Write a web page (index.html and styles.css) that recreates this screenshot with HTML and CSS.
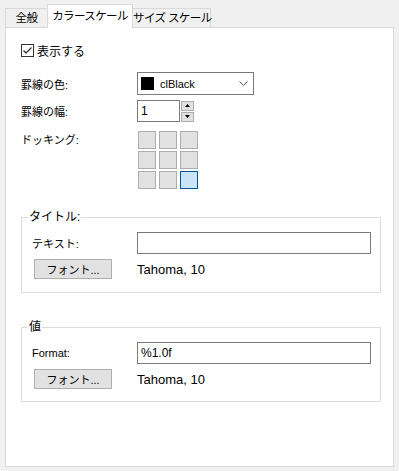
FILE: index.html
```html
<!DOCTYPE html>
<html lang="ja">
<head>
    <meta charset="UTF-8">
    <title>カラースケール</title>
    <link rel="stylesheet" href="styles.css">
</head>
<body>
    <div class="tabs">
        <div class="tab tab-general">全般</div>
        <div class="tab tab-color active">カラースケール</div>
        <div class="tab tab-size">サイズ スケール</div>
    </div>
    <div class="panel">
        <label class="check-row">
            <span class="checkbox">
                <svg width="11" height="11" viewBox="0 0 11 11"><path d="M1.5 5.5 L4 8 L9.5 2.5" fill="none" stroke="#333" stroke-width="1.3"/></svg>
            </span>
            表示する
        </label>

        <div class="row row-combo">
            <span class="label">罫線の色:</span>
            <div class="combo">
                <span class="swatch"></span>
                <span class="combo-text">clBlack</span>
                <svg class="chevron" width="9" height="5" viewBox="0 0 9 5"><path d="M0.5 0.5 L4.5 4.5 L8.5 0.5" fill="none" stroke="#555" stroke-width="1"/></svg>
            </div>
        </div>

        <div class="row row-spin">
            <span class="label">罫線の幅:</span>
            <div class="edit spin-edit">1</div>
            <div class="spin">
                <div class="spin-btn"><svg width="5" height="3" viewBox="0 0 5 3"><path d="M0 3 L2.5 0 L5 3 Z" fill="#000"/></svg></div>
                <div class="spin-btn"><svg width="5" height="3" viewBox="0 0 5 3"><path d="M0 0 L2.5 3 L5 0 Z" fill="#000"/></svg></div>
            </div>
        </div>

        <div class="row row-dock">
            <span class="label">ドッキング:</span>
            <div class="dock-grid">
                <div class="cell"></div>
                <div class="cell"></div>
                <div class="cell"></div>
                <div class="cell"></div>
                <div class="cell"></div>
                <div class="cell"></div>
                <div class="cell"></div>
                <div class="cell"></div>
                <div class="cell selected"></div>
            </div>
        </div>

        <fieldset class="group group-title">
            <legend>タイトル:</legend>
            <div class="group-row">
                <span class="group-label">テキスト:</span>
                <div class="edit wide"></div>
            </div>
            <div class="group-row font-row">
                <button class="btn">フォント...</button>
                <span class="font-name">Tahoma, 10</span>
            </div>
        </fieldset>

        <fieldset class="group group-value">
            <legend>値</legend>
            <div class="group-row">
                <span class="group-label">Format:</span>
                <div class="edit wide">%1.0f</div>
            </div>
            <div class="group-row font-row">
                <button class="btn">フォント...</button>
                <span class="font-name">Tahoma, 10</span>
            </div>
        </fieldset>
    </div>
</body>
</html>
```

FILE: styles.css
```css
body {
    margin: 0;
    background-color: #f0f0f0;
    font-family: "Liberation Sans", "Noto Sans CJK JP", sans-serif;
    font-size: 11px;
    color: #000;
}
.tabs {
    display: flex;
    align-items: flex-end;
    height: 27px;
    padding-left: 5px;
}
.tab {
    height: 18px;
    line-height: 18px;
    font-size: 11.5px;
    letter-spacing: -0.6px;
    text-align: center;
    white-space: nowrap;
    background-color: #f0f0f0;
    border: 1px solid #d9d9d9;
    border-bottom: none;
    margin-right: -1px;
}
.tab-general {
    width: 41px;
}
.tab-color {
    width: 84px;
}
.tab-size {
    width: 77px;
}
.tab.active {
    position: relative;
    height: 23px;
    line-height: 22px;
    margin-bottom: -1px;
    background-color: white;
    z-index: 1;
}
.panel {
    width: 372px;
    height: 438px;
    margin-left: 5px;
    background-color: white;
    border: 1px solid #d9d9d9;
    padding-left: 15px;
    box-sizing: content-box;
}
.check-row {
    display: flex;
    align-items: center;
    gap: 3px;
    margin-top: 16px;
    height: 13px;
    font-size: 12px;
}
.checkbox {
    width: 11px;
    height: 11px;
    border: 1px solid #333;
    display: flex;
}
.row {
    display: flex;
    align-items: center;
}
.label {
    width: 116px;
    font-size: 11px;
}
.row-combo {
    margin-top: 15px;
    height: 23px;
}
.combo {
    width: 112px;
    height: 21px;
    border: 1px solid #7a7a7a;
    display: flex;
    align-items: center;
    padding-left: 3px;
    box-sizing: content-box;
}
.swatch {
    width: 13px;
    height: 13px;
    background-color: #000;
    margin-right: 6px;
}
.combo-text {
    flex: 1;
}
.chevron {
    margin-right: 5px;
}
.row-spin {
    margin-top: 5px;
    height: 22px;
}
.edit {
    border: 1px solid #7a7a7a;
    background-color: white;
    height: 20px;
    line-height: 20px;
    padding-left: 3px;
    box-sizing: border-box;
    font-size: 12px;
}
.spin-edit {
    width: 43px;
    height: 22px;
    line-height: 20px;
}
.spin {
    margin-left: 1px;
    display: flex;
    flex-direction: column;
    gap: 1px;
}
.spin-btn {
    width: 13px;
    height: 10px;
    background-color: #e1e1e1;
    border: 1px solid #adadad;
    box-sizing: border-box;
    display: flex;
    align-items: center;
    justify-content: center;
}
.row-dock {
    margin-top: 9px;
    align-items: flex-start;
}
.dock-grid {
    display: grid;
    grid-template-columns: repeat(3, 18px);
    grid-auto-rows: 18px;
    column-gap: 3px;
    row-gap: 2px;
    margin-left: 1px;
}
.cell {
    background-color: #e1e1e1;
    border: 1px solid #adadad;
}
.cell.selected {
    background-color: #cce4f7;
    border-color: #005499;
}
.group {
    width: 358px;
    margin: 0;
    padding: 0;
    border: 1px solid #dcdcdc;
    min-inline-size: 0;
    box-sizing: content-box;
}
.group legend {
    font-size: 12px;
    line-height: 13px;
    padding: 0 1px;
    margin-left: 6px;
}
.group-title {
    margin-top: 22px;
    height: 80px;
}
.group-value {
    margin-top: 28px;
    height: 79px;
}
.group-row {
    display: flex;
    align-items: center;
}
.group-row:first-of-type {
    margin-top: 8px;
}
.group-label {
    width: 105px;
    padding-left: 10px;
}
.wide {
    width: 234px;
    height: 22px;
}
.font-row {
    margin-top: 5px;
}
.btn {
    width: 78px;
    height: 20px;
    margin-left: 12px;
    padding: 0;
    font-family: inherit;
    font-size: 11px;
    background-color: #e1e1e1;
    border: 1px solid #adadad;
}
.font-name {
    margin-left: 25px;
    font-size: 13px;
}
```
